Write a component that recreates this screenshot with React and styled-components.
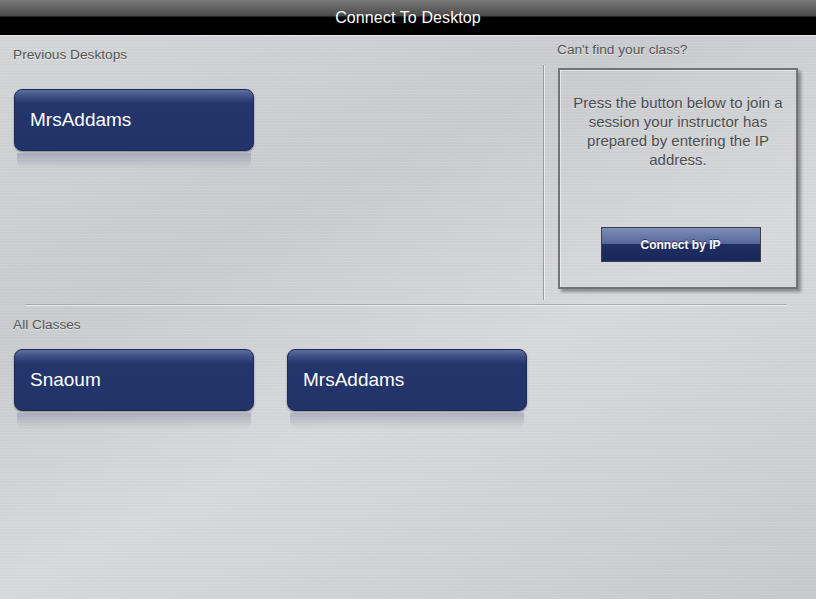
import React from 'react';
import styled, { createGlobalStyle } from 'styled-components';

const GlobalStyle = createGlobalStyle`
	html, body {
		margin: 0;
		padding: 0;
		height: 100%;
	}
	body {
		font-family: 'Liberation Sans', Arial, sans-serif;
		background: #cfd0d3;
	}
	#root {
		height: 100%;
	}
`;

const Page = styled.div`
	width: 816px;
	height: 599px;
	overflow: hidden;
	display: flex;
	flex-direction: column;
	background:
		repeating-linear-gradient(
			180deg,
			rgba(255, 255, 255, 0.06) 0px,
			rgba(255, 255, 255, 0.06) 1px,
			rgba(0, 0, 0, 0.025) 2px,
			rgba(255, 255, 255, 0) 3px
		),
		linear-gradient(155deg, #d5d6d8 0%, #cacbce 35%, #d8d9dc 60%, #c8c9cd 100%);
`;

const TitleBar = styled.header`
	height: 35px;
	flex: none;
	display: flex;
	align-items: center;
	justify-content: center;
	background: linear-gradient(180deg, #7a7a7a 0px, #4a4a4a 16px, #000 17px, #000 35px);
	border-bottom: 1px solid #e6e6e6;
	color: #fff;
	font-size: 16px;
	letter-spacing: 0.1px;
`;

const TopSection = styled.section`
	display: flex;
	height: 268px;
	flex: none;
`;

const LeftPane = styled.div`
	width: 530px;
	padding: 11px 0 0 13px;
`;

const RightPane = styled.div`
	padding: 6px 0 0 13px;
`;

const Divider = styled.div`
	width: 1px;
	height: 235px;
	margin-top: 29px;
	background: #9a9a9c;
	box-shadow: 1px 0 0 rgba(255, 255, 255, 0.6);
`;

const SectionLabel = styled.div`
	font-size: 13.7px;
	line-height: 16px;
	color: #555;
	text-shadow: 0 1px 0 rgba(255, 255, 255, 0.5);
`;

const ButtonRow = styled.div`
	display: flex;
	gap: 33px;
	margin-top: ${(p) => p.$top}px;
	padding-left: 1px;
`;

const ClassButton = styled.button`
	position: relative;
	width: 240px;
	height: 62px;
	padding: 0 0 0 15px;
	border: 1px solid #1b2a5a;
	border-radius: 8px;
	text-align: left;
	font-family: 'Liberation Sans', Arial, sans-serif;
	font-size: 19px;
	color: #fff;
	cursor: pointer;
	background: linear-gradient(180deg, #5d6f9f 0px, #3b4d82 7px, #24356c 14px, #22336a 100%);
	box-shadow: 0 1px 2px rgba(0, 0, 0, 0.35);

	&::after {
		content: '';
		position: absolute;
		left: 2px;
		right: 2px;
		top: 63px;
		height: 16px;
		border-radius: 0 0 8px 8px;
		background: linear-gradient(180deg, rgba(70, 80, 120, 0.28), rgba(140, 150, 175, 0));
	}
`;

const InfoBox = styled.div`
	box-sizing: border-box;
	margin-top: 10px;
	margin-left: 1px;
	width: 240px;
	height: 221px;
	border: 2px solid #747476;
	box-shadow: inset 1px 1px 0 rgba(255, 255, 255, 0.5), 3px 3px 3px rgba(0, 0, 0, 0.35);
	display: flex;
	flex-direction: column;
	align-items: center;
	padding: 23px 12px 25px;
`;

const InfoText = styled.p`
	margin: 0;
	text-align: center;
	font-size: 15px;
	line-height: 19px;
	color: #4d4d4f;
	text-shadow: 0 1px 0 rgba(255, 255, 255, 0.4);
`;

const IpButton = styled.button`
	margin-top: auto;
	margin-left: 5px;
	width: 160px;
	height: 35px;
	border: 1px solid #3c3f4a;
	font-family: 'Liberation Sans', Arial, sans-serif;
	font-weight: bold;
	font-size: 12px;
	color: #fff;
	text-shadow: 0 -1px 0 rgba(0, 0, 0, 0.5);
	cursor: pointer;
	background: linear-gradient(180deg, #7c8db8 0%, #55679a 50%, #1e2e62 50%, #19285a 100%);
`;

const Rule = styled.hr`
	margin: 0 29px 0 25px;
	border: none;
	height: 1px;
	background: #a9aaac;
	box-shadow: 0 1px 0 rgba(255, 255, 255, 0.55);
`;

const BottomSection = styled.section`
	padding: 12px 0 0 13px;
`;

const previous = ['MrsAddams'];
const classes = ['Snaoum', 'MrsAddams'];

function App() {
	return (
		<>
			<GlobalStyle />
			<Page>
				<TitleBar>Connect To Desktop</TitleBar>
				<TopSection>
					<LeftPane>
						<SectionLabel>Previous Desktops</SectionLabel>
						<ButtonRow $top={26}>
							{previous.map((name) => (
								<ClassButton key={name}>{name}</ClassButton>
							))}
						</ButtonRow>
					</LeftPane>
					<Divider />
					<RightPane>
						<SectionLabel>Can't find your class?</SectionLabel>
						<InfoBox>
							<InfoText>
								Press the button below to join a session your instructor has prepared by entering the IP
								address.
							</InfoText>
							<IpButton>Connect by IP</IpButton>
						</InfoBox>
					</RightPane>
				</TopSection>
				<Rule />
				<BottomSection>
					<SectionLabel>All Classes</SectionLabel>
					<ButtonRow $top={16}>
						{classes.map((name) => (
							<ClassButton key={name}>{name}</ClassButton>
						))}
					</ButtonRow>
				</BottomSection>
			</Page>
		</>
	);
}

export default App;
